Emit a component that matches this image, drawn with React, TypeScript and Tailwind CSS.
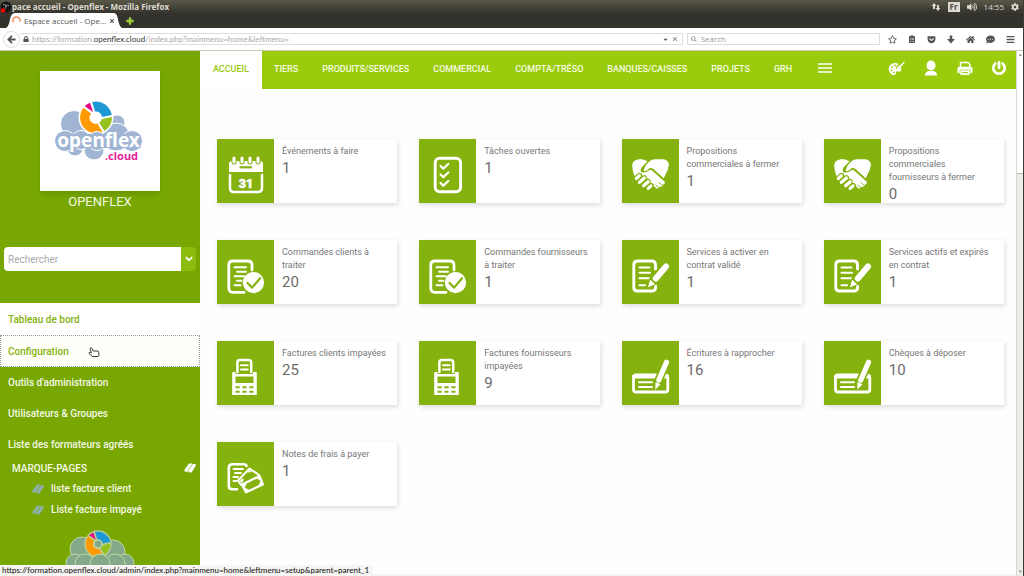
import type { ReactNode } from 'react';
import {
  FaRegStar, FaLock, FaHome, FaBars, FaPowerOff, FaSearch, FaCommentDots, FaClipboardList,
  FaGetPocket, FaVolumeUp, FaCog, FaPlus, FaChevronDown, FaCaretDown, FaTimes,
} from 'react-icons/fa';

const GREEN = '#85b20e';

const NAV = ['TIERS', 'PRODUITS/SERVICES', 'COMMERCIAL', 'COMPTA/TRÉSO', 'BANQUES/CAISSES', 'PROJETS', 'GRH'];

function Tile({ children }: { children: ReactNode }) {
  return (
    <svg viewBox="0 0 57 64" className="w-[57px] h-16 shrink-0 bg-[#85b20e]" fill="none" stroke="#fff" strokeLinecap="round" strokeLinejoin="round" aria-hidden>
      {children}
    </svg>
  );
}

function CalendarIcon() {
  return (
    <Tile>
      <path d="M12 33V25Q12 22 15 22H43Q46 22 46 25V33Z" fill="#fff" stroke="none" />
      {[17, 25, 33, 41].map(x => (
        <g key={x}>
          <path d={`M${x} 18V23`} stroke={GREEN} strokeWidth="5" />
          <path d={`M${x} 19V23`} strokeWidth="3" />
        </g>
      ))}
      <path d="M22.5 28.3H35" stroke={GREEN} strokeWidth="2.2" strokeLinecap="butt" />
      <path d="M13 36V49Q13 53 17 53H41Q45 53 45 49V36" strokeWidth="2.5" />
      <text x="29" y="48.5" textAnchor="middle" fontSize="12.5" fontWeight="900" fontFamily="Roboto, sans-serif" fill="#fff" strokeWidth="0.5">31</text>
    </Tile>
  );
}

function ChecklistIcon() {
  return (
    <Tile>
      <rect x="16.2" y="19.2" width="25.4" height="33.6" rx="4.5" strokeWidth="2.9" />
      {[27, 35.5, 44].map(y => (
        <path key={y} d={`M21.5 ${y}l2.8 2.6 5-4.6`} strokeWidth="2.2" />
      ))}
    </Tile>
  );
}

function OrderIcon() {
  return (
    <Tile>
      <path d="M27 52.3H16Q11.8 52.3 11.8 48V25Q11.8 21 16 21H30.5Q35 21 35 25V30" strokeWidth="2.8" />
      <path d="M17.5 27.3H29M20 31.8H29M17.5 36.3H27M20 40.8H24.5M17.5 45.3H23.5" strokeWidth="2" />
      <circle cx="36.5" cy="42.6" r="10.6" fill="#fff" stroke="none" />
      <path d="M30.5 43l4.6 4.6 8-9.4" stroke={GREEN} strokeWidth="2.2" />
    </Tile>
  );
}

function HandshakeIcon() {
  return (
    <Tile>
      <g fill="#fff" stroke="none">
        <path d="M10.3 25Q11 22 14 21L18 20Q22 20.5 25.5 22.2L19.5 28.5Q17.5 32 20 33.5Q23.5 34 26.5 31L29.5 31L42.5 42.5Q43.6 45 41 45.4Q41 48 38 47.6Q37 50 34.3 49.2L30.5 46L16.5 36L13 38Q10 32 10.3 25Z" />
        <path d="M21.8 30.5Q23 26 26.5 23.2Q29 20 33 20.2L42 20.2Q46 21 47 25.5Q46.5 31 42.8 37L41.6 39.5L31 29.8Q29 28.8 27.2 29.6Q25 32.3 22.5 32.2Q21.2 31.8 21.8 30.5Z" />
      </g>
      <path d="M21 31Q21 33 23.3 32.8Q26 32.3 27.5 30Q29.5 29.3 31 30.4L42 40.5" stroke={GREEN} strokeWidth="1.1" />
      <path d="M37 43.5l3.4 3M33.8 46l3.4 3" stroke={GREEN} strokeWidth="0.9" />
      <path d="M14 39.5l3.5-3M17 43.5l5.4-4.6M21 47l5-4.4M26 49.7l3.3-3" stroke={GREEN} strokeWidth="5.4" />
      <path d="M14.3 39.5l3-2.7M17.4 43.4l5-4.4M21.6 46.8l4.6-4M26.2 49.4l2.8-2.5" strokeWidth="3.2" />
    </Tile>
  );
}

function ContractIcon() {
  return (
    <Tile>
      <path d="M33.5 46V48Q33.5 51 29.5 51H15.5Q11.8 51 11.8 47.5V25Q11.8 21 15.5 21H29.5Q33.5 21 33.5 25V29" strokeWidth="2.9" />
      <path d="M17.5 27.5H27.5M17.5 32.8H28M17.5 38.2H27M17.5 45.3H23" strokeWidth="2.1" />
      <path d="M44.5 26.5L33 39" stroke={GREEN} strokeWidth="9" />
      <path d="M44 26.5L33.8 38.5" strokeWidth="6" />
      <path d="M28 39l6 5.5L25.5 48Z" fill="#fff" stroke={GREEN} strokeWidth="1" />
    </Tile>
  );
}

function InvoiceIcon() {
  return (
    <Tile>
      <path d="M20.4 31V21.5Q20.4 19 23 19H31.5Q34.2 19 34.2 21.5V31" strokeWidth="2.5" />
      <path d="M24 24.3H30.7M24 28.5H30.7" strokeWidth="2" />
      <path d="M15.2 54V32Q15.2 31 16.5 31H18.5V33H36V31H38.5Q39.8 31 39.8 32V54Z" fill="#fff" stroke="none" />
      <path d="M18.5 35.5H36.5V42H18.5Z" fill={GREEN} stroke="none" />
      <path d="M18.5 46.3h4.2m2.7 0h4.2m2.7 0h4.2M18.5 50.7h4.2m2.7 0h4.2m2.7 0h4.2" stroke={GREEN} strokeWidth="2" strokeLinecap="butt" />
    </Tile>
  );
}

function ChequeIcon() {
  return (
    <Tile>
      <rect x="11.5" y="34" width="34.3" height="17" rx="2.6" strokeWidth="2.8" />
      <path d="M12 35.5H45" strokeWidth="3.8" />
      <path d="M17 41.3H30M17 46H30" strokeWidth="2" />
      <path d="M44.5 20.5L35.5 42" stroke={GREEN} strokeWidth="8.5" />
      <path d="M44.5 21.3L36.8 39" strokeWidth="5.2" />
      <path d="M33.5 41l5 2.2-5.2 5.5Z" fill="#fff" stroke="none" />
    </Tile>
  );
}

function ExpenseIcon() {
  return (
    <Tile>
      <path d="M20 47.3H15.5Q11.8 47.3 11.8 44V25.5Q11.8 22.2 15.5 22.2H26.5Q29.5 22.2 29.5 24" strokeWidth="2.6" />
      <path d="M16.5 27H26M18 31H24M16.5 35H21M16.5 39H19.5" strokeWidth="1.8" />
      <path d="M24 43L21 38.5L32.5 26.5L42 33" fill={GREEN} strokeWidth="2" />
      <path d="M25 41.5L22.5 38L27 36.5ZM30 30.5L32.5 28L35 30Z" fill="#fff" stroke="none" />
      <path d="M25 42.5L42.5 34L45.8 42.5L29 50.3Z" fill={GREEN} strokeWidth="2.3" />
      <path d="M25 42.500L30 41.500L27 46ZM42.500 34L44.500 39L39.500 36.500ZM45.800 42.500L41.500 43L44 39ZM29 50.300L28 45.500L32 48Z" fill="#fff" stroke="none" />
    </Tile>
  );
}

const CARDS: { label: string; value: number; Icon: () => ReactNode }[] = [
  { label: 'Événements à faire', value: 1, Icon: CalendarIcon },
  { label: 'Tâches ouvertes', value: 1, Icon: ChecklistIcon },
  { label: 'Propositions commerciales à fermer', value: 1, Icon: HandshakeIcon },
  { label: 'Propositions commerciales fournisseurs à fermer', value: 0, Icon: HandshakeIcon },
  { label: 'Commandes clients à traiter', value: 20, Icon: OrderIcon },
  { label: 'Commandes fournisseurs à traiter', value: 1, Icon: OrderIcon },
  { label: 'Services à activer en contrat validé', value: 1, Icon: ContractIcon },
  { label: 'Services actifs et expirés en contrat', value: 1, Icon: ContractIcon },
  { label: 'Factures clients impayées', value: 25, Icon: InvoiceIcon },
  { label: 'Factures fournisseurs impayées', value: 9, Icon: InvoiceIcon },
  { label: 'Écritures à rapprocher', value: 16, Icon: ChequeIcon },
  { label: 'Chèques à déposer', value: 10, Icon: ChequeIcon },
  { label: 'Notes de frais à payer', value: 1, Icon: ExpenseIcon },
];

/** Four-colour ring that sits on top of the cloud. */
function Ring({ gap }: { gap: string }) {
  return (
    <g>
      <circle r="17.5" fill={gap} />
      <path d="M-3.8-15.5A16 16 0 0 1 15.8-2.5L6-.5A6 6 0 0 0-1-6Z" fill="#1d9ad6" />
      <path d="M16-.5A16 16 0 0 1 8.5 13.5L3.2 5.2A6 6 0 0 0 6 1.5Z" fill="#95c11f" />
      <path d="M6.5 14.6A16 16 0 0 1-12.6-9.8L-4.8-3.8A6 6 0 0 0 1.5 6Z" fill="#ff9a00" />
      <path d="M-11.3-11.2A16 16 0 0 1-6-14.8L-2.8-5.6Z" fill="#e5097f" />
    </g>
  );
}

function Logo() {
  return (
    <svg viewBox="0 0 120 120" className="w-full" role="img" aria-label="openflex.cloud">
      <g fill="#9fb5d3" stroke="#fff" strokeWidth="1">
        <circle cx="34" cy="53" r="13.5" />
        <circle cx="77" cy="52" r="8" />
        <circle cx="76" cy="66" r="14" />
        <circle cx="35" cy="77" r="8" />
        <circle cx="54" cy="79" r="10" />
        <circle cx="92" cy="70" r="10.5" />
      </g>
      <g transform="translate(56 46.5)"><Ring gap="#fff" /></g>
      <g fill="#9fb5d3" stroke="#fff" strokeWidth="1">
        <circle cx="25" cy="70" r="10.5" />
        <circle cx="41" cy="69" r="9.5" />
        <circle cx="57" cy="70" r="9.5" />
      </g>
      <path d="M24 63H92V77H24Z" fill="#9fb5d3" />
      <text x="58.500" y="75.500" textAnchor="middle" fontSize="19" fontWeight="700" fontFamily="'Noto Sans', sans-serif" fill="#fff" stroke="#9fb5d3" strokeWidth="1.5" paintOrder="stroke">openflex</text>
      <text x="98" y="89" textAnchor="end" fontSize="11" fontWeight="700" fontFamily="'Noto Sans', sans-serif" fill="#e5249a" stroke="#fff" strokeWidth="2" paintOrder="stroke">.cloud</text>
    </svg>
  );
}

function FooterLogo() {
  return (
    <svg viewBox="0 0 70 50" className="w-[70px]" aria-hidden>
      <g fill="#83a88a" stroke="#c5d9a0" strokeWidth="1">
        <circle cx="17" cy="19" r="12" />
        <circle cx="48" cy="22" r="12" />
        <circle cx="10" cy="33" r="9" />
        <circle cx="60" cy="33" r="9" />
      </g>
      <g transform="translate(33 14) scale(.78)"><Ring gap="#b9cf9a" /></g>
      <circle cx="33" cy="14" r="4" fill="#83a88a" stroke="#c5d9a0" />
      <g fill="#83a88a" stroke="#c5d9a0" strokeWidth="1">
        <circle cx="20" cy="34" r="10" />
        <circle cx="50" cy="34" r="10" />
        <circle cx="35" cy="34" r="10" />
      </g>
    </svg>
  );
}

function BookIcon({ className }: { className: string }) {
  return (
    <svg viewBox="0 0 12 10" className={`w-3 h-2.5 ${className}`} fill="currentColor" aria-hidden>
      <path d="M5 .5h3.5L4.5 6.8 3.5 9 .3 8.3.6 6.5Z" />
      <path d="M8.8 1 11.8 1 11.6 3 7.5 9.5 4.3 9.3 4.7 7.5Z" />
    </svg>
  );
}

function Browser() {
  return (
    <header className="shrink-0 font-['Open_Sans',sans-serif]">
      <div className="bg-linear-to-b from-[#595847] to-[#33322d] to-50% h-7 flex flex-col justify-between">
        <div className="h-[13px] flex items-center justify-between pr-1 text-[#dfdbd2]">
          <div className="flex items-center">
            <svg viewBox="0 0 12 12" className="size-3" aria-hidden>
              <circle cx="6" cy="6" r="5.5" fill="#151515" />
              <path d="M3 4q2-2 3 1q2-2 3 0M6 5q0 3-2 4" stroke="#999" fill="none" />
              <circle cx="3" cy="9.5" r="2.2" fill="#f00" />
            </svg>
            <h1 className="text-[8px] leading-3 font-bold">pace accueil - Openflex - Mozilla Firefox</h1>
          </div>
          <div className="flex items-center gap-[7px] text-[8px] leading-3">
            <svg viewBox="0 0 10 10" className="size-[10px]" fill="currentColor" aria-hidden>
              <path d="M3 1l2.5 3H4v3H2V4H.5ZM7 9L4.5 6H6V3h2v3h1.5Z" />
            </svg>
            <span className="bg-[#dfdbd2] text-[#4a4943] px-0.5 leading-[10px] font-bold">Fr</span>
            <FaVolumeUp size={10} />
            <span>14:55</span>
            <FaCog size={8} />
          </div>
        </div>
        <div className="flex items-end gap-1 pl-1.5 h-[15px]">
          <div className="relative flex items-center w-[116px] h-[15px]">
            <svg viewBox="0 0 114 15" preserveAspectRatio="none" className="absolute inset-0 size-full" aria-hidden>
              <path d="M0 15Q3 13 4 6Q5 0 9 0H106Q109 0 110 6Q111 13 114 15Z" fill="#fff" />
            </svg>
            <div className="relative flex items-center w-full pl-1.5 pr-2 gap-[3px] text-[#555]">
              <svg viewBox="0 0 10 10" className="size-[9px] shrink-0" aria-hidden>
                <path d="M1.5 7A4 4 0 1 1 8.7 6.5" fill="none" stroke="#e8703a" strokeWidth="1.3" />
              </svg>
              <span className="text-[8px] leading-3 grow whitespace-nowrap">Espace accueil - Ope…</span>
              <button type="button" aria-label="Fermer l'onglet" className="shrink-0"><FaTimes size={6} /></button>
            </div>
          </div>
          <button type="button" aria-label="Nouvel onglet" className="pb-[3px] text-[#a5d63c]"><FaPlus size={8} stroke="currentColor" strokeWidth={60} /></button>
        </div>
      </div>
      <div className="h-[23px] bg-white border-b border-[#c9c9b8] flex items-center pl-[3px] pr-2 text-[#555]">
        <button type="button" aria-label="Retour" className="size-[17px] rounded-full border border-[#ddd] flex items-center justify-center">
          <svg viewBox="0 0 10 10" className="size-[9px]" fill="none" stroke="currentColor" strokeWidth="2" aria-hidden><path d="M5.5 1L1.5 5l4 4M1.5 5H9.5" /></svg>
        </button>
        <div className="flex items-center grow h-3 border-y border-r border-[#ddd] pl-[3px] pr-1 gap-[3px]">
          <FaLock size={6} />
          <p className="text-[8px] leading-[10px] grow text-[#aaa] font-[Lato,sans-serif]">
            https://formation.<span className="text-[#333]">openflex.cloud</span>/index.php?mainmenu=home&amp;leftmenu=
          </p>
          <FaCaretDown size={7} />
          <FaTimes size={6} className="text-[#999]" />
        </div>
        <label className="ml-1 w-[193px] h-3 border border-[#ddd] flex items-center gap-1 pl-[3px] text-[#999]">
          <FaSearch size={6} />
          <input aria-label="Search" placeholder="Search" className="w-full text-[8px] leading-[10px] outline-none placeholder:text-[#999]" />
        </label>
        <div className="flex items-center gap-[11px] pl-2">
          <FaRegStar size={9} />
          <FaClipboardList size={8} />
          <FaGetPocket size={9} />
          <svg viewBox="0 0 8 9" className="w-2" fill="currentColor" aria-hidden><path d="M2.7.5h2.6V4H8L4 8.5 0 4H2.7Z" /></svg>
          <FaHome size={9} />
          <FaCommentDots size={9} />
          <FaBars size={9} />
        </div>
      </div>
    </header>
  );
}

function Sidebar() {
  return (
    <aside className="w-[200px] shrink-0 bg-[#77a700] text-[#f4f8e6] flex flex-col overflow-hidden *:shrink-0">
      <div className="flex flex-col items-center pt-5">
        <div className="w-[120px] bg-white shadow-md"><Logo /></div>
        <p className="text-[13px] leading-[22px]">OPENFLEX</p>
      </div>
      <form className="mt-[34px] mx-1 flex h-6" onSubmit={e => e.preventDefault()}>
        <input aria-label="Rechercher" placeholder="Rechercher" className="grow min-w-0 bg-white rounded-l-sm pl-1 text-[10px] text-gray-700 placeholder:text-[#aaa] outline-none" />
        <button type="submit" aria-label="Options de recherche" className="w-[15px] bg-[#8bbb0b] rounded-r-sm flex items-center justify-center text-white">
          <FaChevronDown size={8} stroke="currentColor" strokeWidth={40} />
        </button>
      </form>
      <nav className="mt-8 text-[10px] font-medium">
        <a href="#tableau" className="flex items-center h-8 pl-2 bg-white text-[#85b20e]">Tableau de bord</a>
        <a href="#configuration" className="relative flex items-center h-8 pl-2 bg-[#fffffa] text-[#85b20e] outline-1 -outline-offset-1 outline-dotted outline-[#999]">
          Configuration
          <svg viewBox="0 0 12 12" className="absolute left-[88px] top-3 size-3" fill="#fff" stroke="#333" strokeWidth="1" strokeLinejoin="round" aria-hidden>
            <path d="M2 1.5Q3-.2 4.2 1.5L5.5 4H9.5Q10.8 4 10.8 5.5V8.5L10 9.5H4.5L1 6.5Q.8 5 2.2 5.2L3.5 5.8Z" />
          </svg>
        </a>
        <a href="#outils" className="flex items-center h-[31px] pl-2">Outils d'administration</a>
        <a href="#utilisateurs" className="flex items-center h-[31px] pl-2">Utilisateurs &amp; Groupes</a>
        <a href="#formateurs" className="flex items-center h-[31px] pl-2">Liste des formateurs agréés</a>
      </nav>
      <div className="flex items-center justify-between pl-3 pr-1 h-4 text-[10px] font-medium">
        <h2>MARQUE-PAGES</h2>
        <BookIcon className="text-white" />
      </div>
      <ul className="text-[10px] font-medium pt-0.5">
        {['liste facture client', 'Liste facture impayé'].map(label => (
          <li key={label} className="h-[21px]">
            <a href="#favoris" className="flex items-center gap-[7px] pl-8 h-full">
              <BookIcon className="text-[#8fb0a8]" />
              {label}
            </a>
          </li>
        ))}
      </ul>
      <div className="flex justify-center pt-[10px]"><FooterLogo /></div>
    </aside>
  );
}

function TopNav() {
  return (
    <nav className="h-[38px] shrink-0 bg-[#9acb0c] flex items-stretch text-[9px] font-medium text-[#f6fbe0]">
      <a href="#accueil" className="w-[62px] bg-white text-[#9acb0c] flex items-center justify-center">ACCUEIL</a>
      {NAV.map(n => (
        <a key={n} href="#menu" className="flex items-center px-3">{n}</a>
      ))}
      <button type="button" aria-label="Menu" className="px-3.5 pb-1">
        <svg viewBox="0 0 14 10" className="w-3.5" stroke="#fff" strokeWidth="1.5" aria-hidden><path d="M0 1H14M0 5H14M0 9H14" /></svg>
      </button>
      <div className="ml-auto flex items-center gap-[19px] pr-2.5 pb-1 text-white">
        <button type="button" aria-label="Thème">
          <svg viewBox="0 0 17 15" className="w-[17px]" aria-hidden>
            <path d="M8 2C3.5 1.5.5 5 .8 8.5 1 12 3.5 14 6 14c2.5 0 1.5-2.5 2.5-3.5S12 12 13 9.5c.5-1.5 0-3-.5-3.8L10 8 8 7.5 8 6 10.5 3Z" fill="#fff" />
            <path d="M9 7L16.3 1.2 11 8Z" fill="#fff" stroke="#fff" />
            <g fill="#9acb0c"><circle cx="7" cy="4.500" r=".9" /><circle cx="4" cy="6.200" r=".9" /><circle cx="3.500" cy="9.300" r=".9" /><circle cx="6" cy="11.500" r=".9" /></g>
          </svg>
        </button>
        <button type="button" aria-label="Utilisateur">
          <svg viewBox="0 0 14 16" className="w-3.5" fill="#fff" aria-hidden>
            <ellipse cx="7" cy="5.5" rx="4.5" ry="5" /><path d="M1 15.5Q1 11.5 5 11H9Q13 11.5 13 15.5Z" />
          </svg>
        </button>
        <button type="button" aria-label="Imprimer">
          <svg viewBox="0 0 16 15" className="w-4" aria-hidden>
            <path d="M3.5 7V1.5H11L12.8 3.2V7" fill="none" stroke="#fff" strokeWidth="1.5" />
            <rect x=".5" y="5.8" width="15" height="6.4" rx="1.5" fill="#fff" />
            <rect x="3" y="9" width="10" height="5.3" rx=".8" fill="#fff" stroke="#9acb0c" strokeWidth=".7" />
            <path d="M5 11.6H11" stroke="#9acb0c" strokeWidth="1" />
            <circle cx="13.7" cy="7.6" r=".6" fill="#9acb0c" />
          </svg>
        </button>
        <button type="button" aria-label="Déconnexion"><FaPowerOff size={14} stroke="currentColor" strokeWidth={20} /></button>
      </div>
    </nav>
  );
}

function Card({ label, value, Icon }: (typeof CARDS)[number]) {
  return (
    <article className="flex h-16 bg-white shadow-[1px_2px_5px_rgba(0,0,0,0.14)]">
      <Icon />
      <div className="pt-1.5 px-2 min-w-0 text-[#777]">
        <h3 className="text-[9px] leading-[13px]">{label}</h3>
        <p className="text-[15px] leading-[21px] text-[#6c6c6c]">{value}</p>
      </div>
    </article>
  );
}

export default function App() {
  return (
    <div className="h-screen flex flex-col overflow-hidden bg-white font-[Roboto,sans-serif] border-r border-[#3c3b37]">
      <Browser />
      <div className="grow min-h-0 flex">
        <Sidebar />
        <div className="grow min-w-0 flex flex-col">
          <TopNav />
          <main className="grow bg-[#fefefe] pl-[17px] pr-3 pt-[50px] border-b-2 border-[#f5f5f5]">
            <div className="grid grid-cols-4 gap-x-[22px] gap-y-[37px]">
              {CARDS.map(c => <Card key={c.label} {...c} />)}
            </div>
          </main>
        </div>
        <div className="w-[7px] shrink-0 bg-[#eeece6] border-l border-[#d8d6d0] flex flex-col justify-between items-center text-[#888]" aria-hidden>
          <div className="w-full h-[123px] bg-white border-b border-[#bbb] text-[5px] leading-[7px] text-center">▴</div>
          <span className="text-[5px] leading-[10px]">▾</span>
        </div>
      </div>
      <footer className="fixed bottom-0 left-0 bg-[#f6f5f3] pl-0.5 pr-1 h-[11px] text-[8px] leading-[11px] text-[#222] font-[Lato,sans-serif] font-medium">
        https://formation.openflex.cloud/admin/index.php?mainmenu=home&amp;leftmenu=setup&amp;parent=parent_1
      </footer>
    </div>
  );
}
